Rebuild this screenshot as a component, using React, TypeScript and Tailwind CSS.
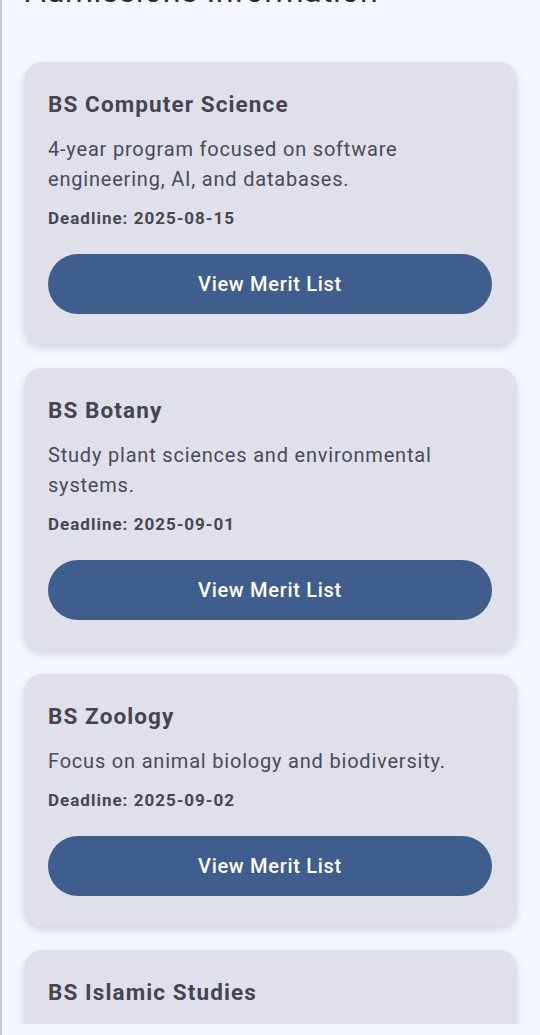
import React from "react";

type Program = { title: string; description: string; deadline: string };

const programs: Program[] = [
  {
    title: "BS Computer Science",
    description: "4-year program focused on software engineering, AI, and databases.",
    deadline: "2025-08-15",
  },
  {
    title: "BS Botany",
    description: "Study plant sciences and environmental systems.",
    deadline: "2025-09-01",
  },
  {
    title: "BS Zoology",
    description: "Focus on animal biology and biodiversity.",
    deadline: "2025-09-02",
  },
  {
    title: "BS Islamic Studies",
    description: "Explore Islamic history, theology and jurisprudence.",
    deadline: "2025-09-05",
  },
];

const ProgramCard: React.FC<{ program: Program }> = ({ program }) => (
  <div className="bg-[#e0e0ea] rounded-[18px] shadow-[0_4px_8px_rgba(0,0,0,0.14)] pl-6 pr-[25px] pt-[26px] pb-[30px]">
    <h2 className="text-[22.5px] leading-8 font-bold text-[#44454f] tracking-[1.1px]">{program.title}</h2>
    <p className="mt-[14px] text-[20px] leading-[30px] text-[#4a4b55] tracking-[0.8px]">{program.description}</p>
    <p className="mt-[12px] text-[17px] leading-6 font-bold text-[#46474f] tracking-[1px]">
      Deadline: {program.deadline}
    </p>
    <button className="mt-[24px] w-full h-[60px] rounded-full bg-[#3f5e8e] text-white text-[20px] font-medium tracking-[0.7px]">
      View Merit List
    </button>
  </div>
);

export default function App() {
  return (
    <div
      className="w-[540px] h-[1035px] bg-[#f4f7fd] border-l-2 border-[#c9ccd3] overflow-hidden"
      style={{ fontFamily: "Roboto, 'Noto Sans', sans-serif" }}
    >
      <div className="h-[1024px] overflow-hidden">
        <h1 className="-mt-[27px] pl-[23px] text-[32px] leading-[36px] text-[#2b2c33] tracking-[0.5px]">
          Admissions Information
        </h1>
        <div className="mt-[53px] pl-[22px] pr-[23px] flex flex-col gap-[24px]">
          {programs.map((p) => (
            <ProgramCard key={p.title} program={p} />
          ))}
        </div>
      </div>
    </div>
  );
}
